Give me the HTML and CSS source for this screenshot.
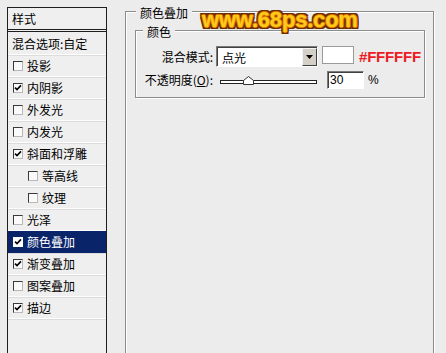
FILE: index.html
```html
<!DOCTYPE html>
<html lang="zh">
<head>
<meta charset="utf-8">
<title>图层样式</title>
<link rel="stylesheet" href="styles.css">
</head>
<body>
<div class="styles">
  <div class="head">样式</div>
  <div class="row first">混合选项:自定</div>
  <div class="row"><span class="cb"></span>投影</div>
  <div class="row"><span class="cb"><svg viewBox="0 0 8 8"><polyline points="1,3.6 3,5.6 7,1.4"/></svg></span>内阴影</div>
  <div class="row"><span class="cb"></span>外发光</div>
  <div class="row"><span class="cb"></span>内发光</div>
  <div class="row"><span class="cb"><svg viewBox="0 0 8 8"><polyline points="1,3.6 3,5.6 7,1.4"/></svg></span>斜面和浮雕</div>
  <div class="row sub"><span class="cb"></span>等高线</div>
  <div class="row sub"><span class="cb"></span>纹理</div>
  <div class="row"><span class="cb"></span>光泽</div>
  <div class="row sel"><span class="cb"><svg viewBox="0 0 8 8"><polyline points="1,3.6 3,5.6 7,1.4"/></svg></span>颜色叠加</div>
  <div class="row"><span class="cb"><svg viewBox="0 0 8 8"><polyline points="1,3.6 3,5.6 7,1.4"/></svg></span>渐变叠加</div>
  <div class="row"><span class="cb"></span>图案叠加</div>
  <div class="row"><span class="cb"><svg viewBox="0 0 8 8"><polyline points="1,3.6 3,5.6 7,1.4"/></svg></span>描边</div>
</div>
<div class="main">
  <div class="wm">www.68ps.com</div>
  <div class="group outer">
    <span class="legend">颜色叠加</span>
    <div class="group inner">
      <span class="legend">颜色</span>
      <div class="line l1">
        <span class="lbl">混合模式:</span>
        <div class="select"><span class="val">点光</span><span class="btn"><svg viewBox="0 0 7 4"><polygon points="0,0 7,0 3.5,4"/></svg></span></div>
        <span class="swatch"></span>
        <span class="hex">#FFFFFF</span>
      </div>
      <div class="line l2">
        <span class="lbl">不透明度(<u>O</u>):</span>
        <div class="slider"><span class="track"></span><svg class="thumb" viewBox="0 0 11 9"><polygon points="5.5,0.5 10.5,4.5 10.5,8.5 0.5,8.5 0.5,4.5"/></svg></div>
        <span class="num">30</span>
        <span class="pct">%</span>
      </div>
    </div>
  </div>
</div>
</body>
</html>
```
FILE: styles.css
```css
html, body {
  margin: 0;
  height: 100%;
  overflow: hidden;
}
body {
  background: #ececec;
  font-family: "Noto Sans CJK SC", "Liberation Sans", sans-serif;
  font-size: 12px;
  color: #000;
  display: flex;
  align-items: flex-start;
}
.styles {
  box-sizing: border-box;
  margin: 7px 0 0 7px;
  width: 100px;
  height: 346px;
  border: 1px solid #1e1e1e;
  border-bottom: none;
  background: #efefef;
}
.head {
  height: 21px;
  line-height: 21px;
  padding-left: 4px;
  border-bottom: 3px double #1e1e1e;
}
.row {
  display: flex;
  align-items: center;
  height: 21px;
  padding-left: 5px;
  border-bottom: 1px solid #fdfdfd;
  box-shadow: 0 1px 0 #dcdcdc;
  white-space: nowrap;
}
.row.first {
  height: 22px;
  padding-left: 4px;
}
.row.sub {
  padding-left: 20px;
}
.row.sel {
  background: #0a246a;
  color: #fff;
  border-bottom-color: #0a246a;
}
.cb {
  box-sizing: border-box;
  width: 10px;
  height: 10px;
  margin-right: 4px;
  background: #fafafa;
  border: 1px solid;
  border-color: #3a3a3a #b8b8b8 #b8b8b8 #3a3a3a;
  display: flex;
  align-items: center;
  justify-content: center;
}
.sel .cb {
  background: #fff;
  border-color: #fff;
}
.cb svg {
  width: 8px;
  height: 8px;
}
.cb polyline {
  fill: none;
  stroke: #000;
  stroke-width: 1.6;
}
.main {
  position: relative;
  margin: 11px 0 0 18px;
  width: 309px;
}
.wm {
  position: absolute;
  left: 77px;
  top: -2px;
  z-index: 2;
  font-family: "Liberation Sans", sans-serif;
  font-weight: bold;
  font-size: 22px;
  line-height: 22px;
  letter-spacing: -0.2px;
  color: #ffcb1a;
  text-shadow:
    1px 0 0 #e07a00, -1px 0 0 #e07a00, 0 1px 0 #e07a00, 0 -1px 0 #e07a00,
    2px 0 0 #6b2c00, -2px 0 0 #6b2c00, 0 2px 0 #6b2c00, 0 -2px 0 #6b2c00,
    2px 2px 0 #6b2c00, -2px -2px 0 #6b2c00, 2px -2px 0 #6b2c00, -2px 2px 0 #6b2c00;
}
.group {
  position: relative;
  box-sizing: border-box;
  border: 1px solid #8c8c8c;
  box-shadow: inset 1px 1px 0 #fff, 1px 1px 0 #fff;
}
.outer {
  height: 343px;
  border-bottom: none;
  padding: 18px 8px 0 9px;
}
.inner {
  height: 68px;
  padding: 15px 0 0 7px;
}
.legend {
  position: absolute;
  background: #ececec;
  padding: 0 4px;
  line-height: 14px;
  white-space: nowrap;
}
.outer > .legend {
  left: 10px;
  top: -6px;
}
.inner > .legend {
  left: 7px;
  top: -6px;
}
.line {
  display: flex;
  align-items: center;
  white-space: nowrap;
}
.l1 {
  height: 21px;
}
.l2 {
  height: 19px;
  margin-top: 3px;
}
.lbl {
  width: 70px;
  text-align: right;
}
.select {
  box-sizing: border-box;
  margin-left: 3px;
  width: 102px;
  height: 21px;
  background: #fff;
  border: 1px solid;
  border-color: #7a7a7a #fff #fff #7a7a7a;
  box-shadow: inset 1px 1px 0 #404040;
  display: flex;
  align-items: stretch;
  padding: 1px 0 0 1px;
}
.val {
  flex: 1;
  padding-left: 4px;
  line-height: 19px;
}
.btn {
  box-sizing: border-box;
  width: 15px;
  background: #d4d0c8;
  border: 1px solid;
  border-color: #f4f4f4 #404040 #404040 #f4f4f4;
  display: flex;
  align-items: center;
  justify-content: center;
}
.btn svg {
  width: 7px;
  height: 4px;
}
.btn polygon {
  fill: #000;
}
.swatch {
  box-sizing: border-box;
  align-self: flex-start;
  margin-left: 4px;
  width: 32px;
  height: 18px;
  background: #fff;
  border: 1px solid #9a9a9a;
}
.hex {
  margin-left: 5px;
  font-family: "Liberation Sans", sans-serif;
  font-weight: bold;
  font-size: 15px;
  color: #ee1b24;
  letter-spacing: -0.2px;
}
.slider {
  position: relative;
  margin-left: 7px;
  width: 97px;
  height: 19px;
  display: flex;
  align-items: center;
}
.track {
  box-sizing: border-box;
  width: 100%;
  height: 4px;
  background: #fff;
  border: 1px solid #222;
  margin-top: 4px;
}
.thumb {
  position: absolute;
  left: 23px;
  top: 6px;
  width: 11px;
  height: 9px;
}
.thumb polygon {
  fill: #fff;
  stroke: #333;
  stroke-width: 1;
}
.num {
  box-sizing: border-box;
  margin-left: 10px;
  width: 37px;
  height: 18px;
  line-height: 16px;
  padding-left: 2px;
  background: #fff;
  border: 1px solid;
  border-color: #7a7a7a #fff #fff #7a7a7a;
  box-shadow: inset 1px 1px 0 #404040;
  font-family: "Liberation Sans", sans-serif;
}
.pct {
  margin-left: 4px;
  font-family: "Liberation Sans", sans-serif;
}
```
